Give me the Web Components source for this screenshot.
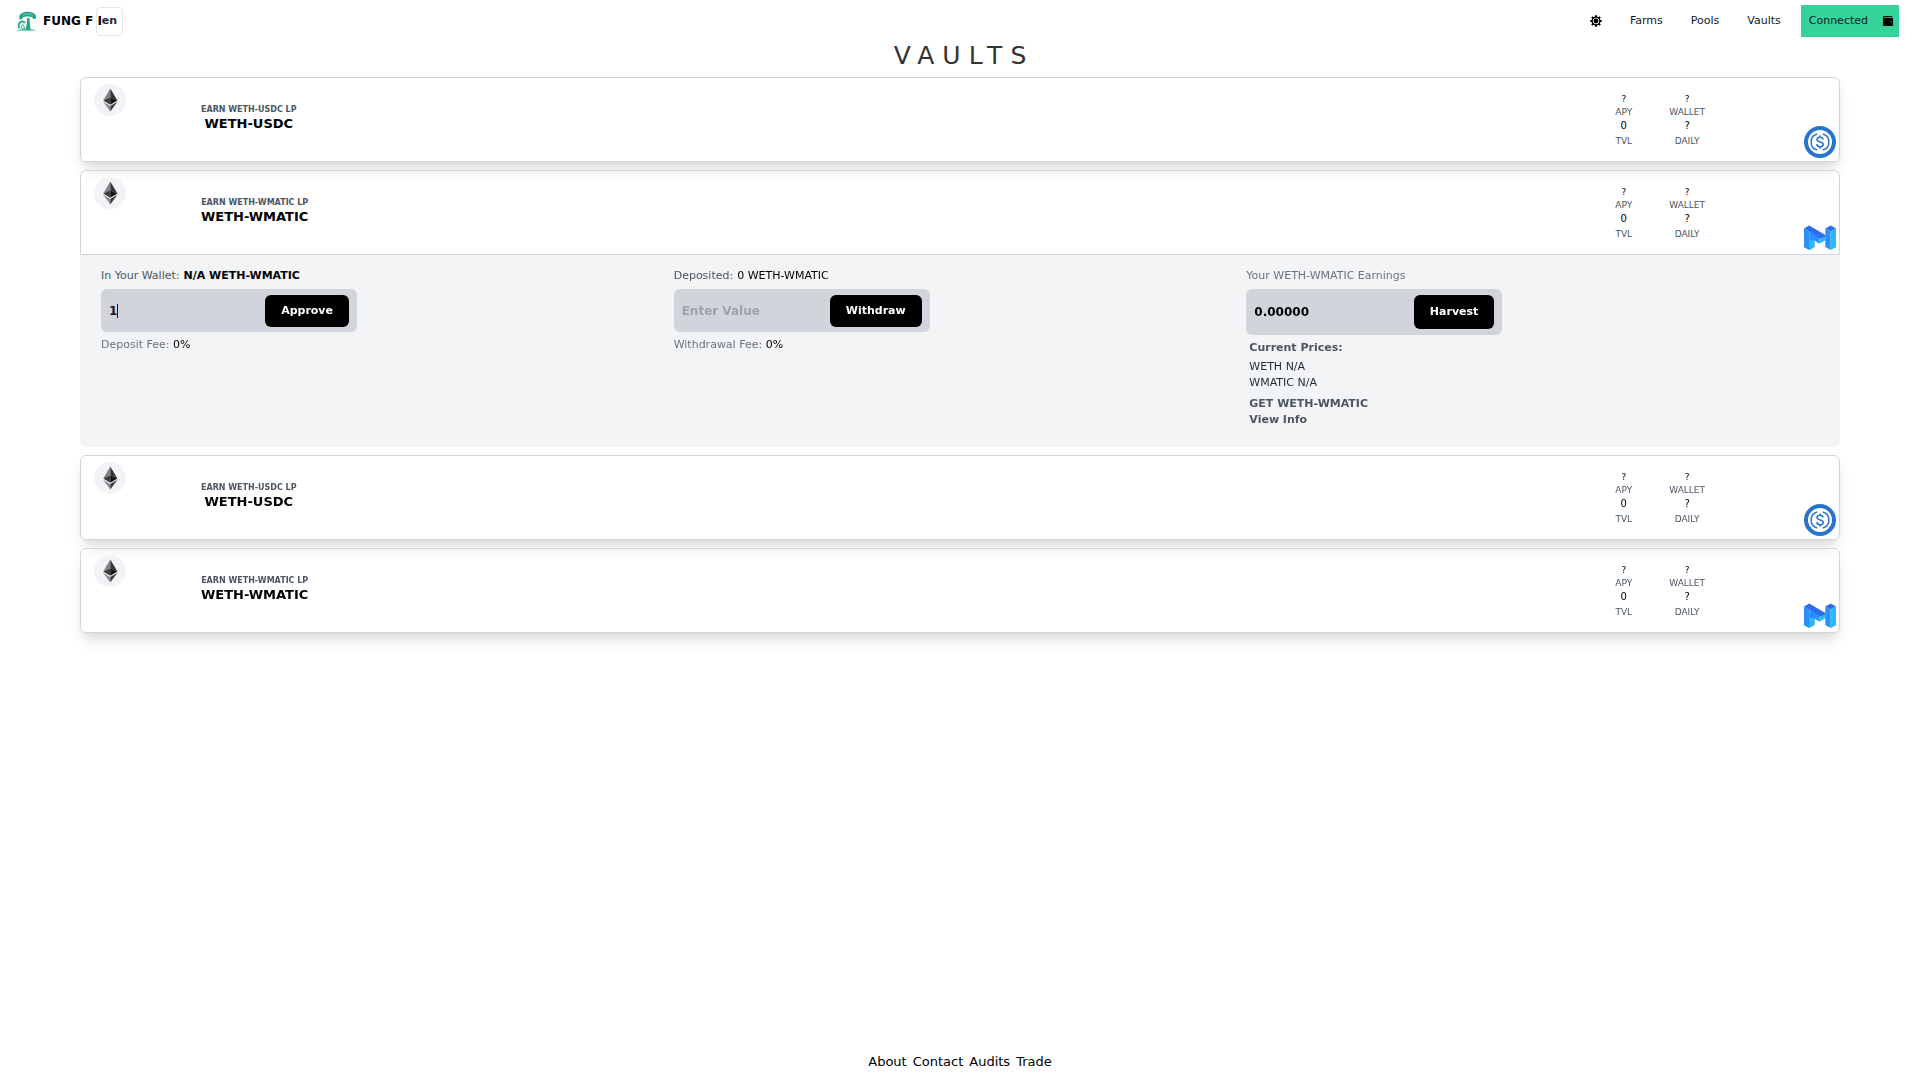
<!DOCTYPE html>
<html lang="en">
<head>
<meta charset="utf-8">
<title>Vaults</title>
<style>
html, body { height: 100%; }
body { margin: 0; background: #fff; font-family: "DejaVu Sans", sans-serif; font-size: 13px; line-height: 20px; color: #111827; }
</style>
</head>
<body>
<vault-app></vault-app>
<script>
const define = (name, html, setup) => {
  const t = document.createElement('template');
  t.innerHTML = '<style>*{box-sizing:border-box}a{color:inherit;text-decoration:none}button,input,select{font:inherit;color:inherit;margin:0}button{cursor:pointer}</style>' + html;
  customElements.define(name, class extends HTMLElement {
    constructor() {
      super();
      this.attachShadow({ mode: 'open' }).append(t.content.cloneNode(true));
    }
    connectedCallback() { if (setup) setup(this, this.shadowRoot); }
  });
};

const icons = {
  logo: '<svg viewBox="0 0 21 20" width="21" height="20"><g fill="#22a58a"><path d="M3.500 8C2 3 7 .8 11.500 .8S21 3 20 7c-.8 1.600-3 1.400-3.500-.2C15 5 8 5 6.800 6.800 6.300 8.400 4.500 9 3.500 8z"/><path d="M11 7.500c1.200-1 2-.8 2.600 0-.2 3 .8 7 .9 11.500h-5c1-4 1.500-7 1.500-11.500z"/><path d="M.2 19.500c4-1.800 16-1.800 20.500 0z"/></g><path d="M3 17.500c-1-4 .5-6.500 3-7.200 1.800 0 2.500 1 2.700 2" fill="none" stroke="#22a58a" stroke-width="1.800"/><path d="M8.300 14.300a2 2 0 1 0 .3 3.200v-1.300H7.200" fill="none" stroke="#22a58a"/><path d="M6.500 4c3-1.400 7-1.400 10.500 0" fill="none" stroke="#8fd3c3" stroke-width=".8"/></svg>',
  sun: '<svg viewBox="0 0 12 12" width="12" height="12"><g fill="none" stroke="#000"><circle cx="6" cy="6" r="3.900" stroke-width="1.400"/><path stroke-width="1.900" d="M6 .3v2M6 9.700v2M.3 6h2M9.700 6h2M1.800 1.800l1.600 1.600M8.600 8.600l1.600 1.600M1.800 10.200l1.600-1.600M8.600 3.400l1.600-1.600"/></g><circle cx="6" cy="6" r="2.400"/></svg>',
  wallet: '<svg viewBox="0 0 10 10" width="10" height="10"><path fill-rule="evenodd" d="M1.300 0h8v1H1v.7h8.200q.8 0 .8.800V9q0 .9-.9.900H1Q0 9.900 0 9V1.200Q0 0 1.300 0zM7.500 5.200v1h1v-1z"/></svg>',
  eth: '<svg viewBox="0 0 32 32" width="32" height="32"><circle cx="16" cy="16" r="16" fill="#f2f3f7"/><path d="M16.300 4.500v8.800L9.200 16.500z" fill="#828384"/><path d="M16.300 4.500v8.800l7.100 3.200z" fill="#343434"/><path d="M9.200 16.500l7.100-3.200v7.400z" fill="#3c3c3b"/><path d="M16.300 13.300l7.100 3.200-7.100 4.200z" fill="#141414"/><path d="M9.200 17.800l7.100 4.200v5.500z" fill="#8c8c8c"/><path d="M16.300 22l7.100-4.200-7.100 9.700z" fill="#3c3c3b"/></svg>',
  usdc: '<svg viewBox="0 0 32 32" width="32" height="32"><circle cx="16" cy="16" r="14" fill="#fff" stroke="#2775ca" stroke-width="4"/><g fill="none" stroke="#2775ca" stroke-width="1.500"><path d="M13.200 8A8.300 8.300 0 0 0 13.200 24M18.800 8A8.300 8.300 0 0 1 18.800 24"/><path stroke-width="1.600" d="M19 13.500c-.2-1.500-1.300-2.200-3-2.200-1.800 0-2.900.8-2.900 2.200 0 3.100 6.100 1.700 6.100 4.900 0 1.500-1.300 2.300-3.200 2.300S13 19.800 12.800 18.200M16 9.600v1.700M16 20.700v1.800"/></g></svg>',
  matic: '<svg viewBox="0 0 32 26" width="32" height="26"><path d="M5.200 6.400l10.300 6v6.300l-5-3.200V22L5.200 25z" fill="#2891f9"/><path d="M5.200 15.500l5.300-.7V22L5.200 25z" fill="#2cb8fa"/><path d="M15.500 12.400l6-1.400v4.200l-6 3.500z" fill="#2cb8fa"/><path d="M0 3.500l5.200 2.900V25L0 22.200z" fill="#2891f9"/><path d="M0 3.500L5.200 .5l16.200 9.400v1.600l-5.600 1.900L5.200 6.400z" fill="#2b6def"/><path d="M21.300 3.500L26.700 .5l5.300 3-5.300 2.900z" fill="#2b6def"/><path d="M21.300 3.500l5.400 2.900V25l-5.400-2.900z" fill="#2891f9"/><path d="M26.700 6.400L32 3.500v18.700L26.700 25z" fill="#2cb8fa"/></svg>'
};

define('ui-icon', '<style>:host{display:block}svg{display:block}</style><div></div>', (el, root) => {
  root.querySelector('div').innerHTML = icons[el.getAttribute('name')];
});

define('site-header', `<style>
:host{display:flex;align-items:flex-start;justify-content:space-between;padding:5px 21px 0 16px;height:40px}
.brand{display:flex;align-items:center;height:32px}
.brand a{display:flex;align-items:center;gap:6px;font-size:12px;font-weight:700;color:#000;white-space:pre}
select{appearance:none;background:transparent;border:1px solid #e5e7eb;border-radius:4px;width:27px;height:29px;padding:0 5px;font-size:11px;font-weight:700;color:#1f2937;margin-left:-6px}
nav{display:flex;align-items:center;height:32px;font-size:11px}
nav>a{margin-right:28px}
.theme{border:0;padding:0;background:none;margin-right:28px}
.wallet{display:flex;align-items:center;gap:15px;height:32px;border:0;border-radius:0;background:#34d399;padding:0 6px 0 8px;margin-left:-8px}
</style>
<div class="brand"><a href="#"><ui-icon name="logo"></ui-icon><span>FUNG F I</span></a><select aria-label="Language"><option>en</option></select></div>
<nav><button class="theme" aria-label="Theme"><ui-icon name="sun"></ui-icon></button><a href="#">Farms</a><a href="#">Pools</a><a href="#">Vaults</a><button class="wallet">Connected<ui-icon name="wallet"></ui-icon></button></nav>`);

define('stat-item', `<style>
:host{display:flex;flex-direction:column;align-items:center;font-size:9px}
.v{line-height:14px;color:#000}
.l{line-height:13px;color:#4b5563}
:host([large]) .v{font-size:10px}
:host([large]) .l{line-height:16px}
</style><span class="v"><slot></slot></span><span class="l"></span>`, (el, root) => { root.querySelector('.l').textContent = el.getAttribute('label'); });

define('vault-card', `<style>
:host{display:block}
.card{display:flex;height:85px;border:1px solid #d1d5db;border-radius:6px;box-shadow:0 10px 15px -3px rgba(0,0,0,.12),0 4px 8px -2px rgba(0,0,0,.06);cursor:pointer}
:host([open]) .card{border-radius:6px 6px 0 0;box-shadow:none}
.from{padding:6px 0 0 13px;width:120px}
.name{padding-top:25px;text-align:center}
.earn{font-size:8px;line-height:14px;font-weight:700;color:#4b5563}
.pair{font-size:13px;line-height:14px;font-weight:700;color:#000}
.stats{display:grid;grid-template-columns:auto auto;column-gap:37px;margin-left:auto;padding-top:14px;align-content:start}
.to{display:flex;align-items:flex-end;width:134px;justify-content:flex-end;padding:0 3px 3px 0}
</style>
<section><div class="card"><div class="from"><ui-icon name="eth"></ui-icon></div>
<div class="name"><div class="earn"></div><div class="pair"></div></div>
<div class="stats"><stat-item label="APY">?</stat-item><stat-item label="WALLET">?</stat-item><stat-item large label="TVL">0</stat-item><stat-item large label="DAILY">?</stat-item></div>
<div class="to"></div></div><slot></slot></section>`, (el, root) => {
  const pair = el.getAttribute('pair');
  root.querySelector('.earn').textContent = 'EARN ' + pair + ' LP';
  root.querySelector('.pair').textContent = pair;
  const icon = document.createElement('ui-icon');
  icon.setAttribute('name', el.getAttribute('token'));
  root.querySelector('.to').replaceChildren(icon);
});

define('vault-details', `<style>
:host{display:grid;grid-template-columns:repeat(3,1fr);height:192px;padding:13px 21px;background:#f3f4f6;border-radius:0 0 6px 6px;font-size:11px;line-height:16px}
.row{display:flex;gap:4px;color:#4b5563}
.row span,.fee span{color:#000}.row b{color:#000}
.gray,.fee{color:#6b7280}
.box{display:flex;align-items:center;justify-content:space-between;width:256px;margin:5px 0;padding:6px 8px 5px;background:#d1d5db;border-radius:6px;font-weight:700;font-size:12px;color:#000}
input{width:130px;border:0;background:none;outline:0;padding:0;color:#111827}
input::placeholder{color:#9ca3af;opacity:1}
#dep{caret-color:transparent}
#dep:focus{background:linear-gradient(#111827,#111827) 8px center/1px 14px no-repeat}
button{height:32px;border:0;border-radius:6px;background:#000;color:#fff;padding:0 16px;font-size:11px}
.tall{padding-bottom:6px}.tall button{height:34px}
.links{padding:0 0 0 3px;display:flex;flex-direction:column;color:#1f2937}
.strong{font-weight:700;color:#4b5563}
p{margin:0}.prices{padding:3px 0 5px}
</style>
<div><label class="row" for="dep">In Your Wallet: <b>N/A WETH-WMATIC</b></label><div class="box"><input id="dep" value="1"><button>Approve</button></div><p class="fee">Deposit Fee: <span>0%</span></p></div>
<div><label class="row" for="wd">Deposited: <span>0 WETH-WMATIC</span></label><div class="box"><input id="wd" placeholder="Enter Value"><button>Withdraw</button></div><p class="fee">Withdrawal Fee: <span>0%</span></p></div>
<div><p class="gray">Your WETH-WMATIC Earnings</p><div class="box tall"><span>0.00000</span><button>Harvest</button></div>
<div class="links"><span class="strong">Current Prices:</span><div class="prices"><p>WETH N/A</p><p>WMATIC N/A</p></div><a class="strong" href="#">GET WETH-WMATIC</a><a class="strong" href="#">View Info</a></div></div>`, (el, root) => {
  root.querySelector('#dep').focus();
});

define('site-footer', `<style>:host{display:flex;justify-content:center;gap:6px;font-size:13px;line-height:20px;color:#000;padding-bottom:8px}</style>
<a href="#">About</a><a href="#">Contact</a><a href="#">Audits</a><a href="#">Trade</a>`);

define('vault-app', `<style>
:host{display:flex;flex-direction:column;min-height:100vh}
h1{margin:0;padding-left:8px;font-size:25px;line-height:32px;font-weight:400;letter-spacing:8px;text-align:center;color:#333}
main{flex:1;padding:0 80px}
.list{display:flex;flex-direction:column;gap:8px;padding-top:5px}
</style>
<site-header></site-header><main><h1>VAULTS</h1><div class="list">
<vault-card pair="WETH-USDC" token="usdc"></vault-card>
<vault-card open pair="WETH-WMATIC" token="matic"><vault-details></vault-details></vault-card>
<vault-card pair="WETH-USDC" token="usdc"></vault-card>
<vault-card pair="WETH-WMATIC" token="matic"></vault-card>
</div></main><site-footer></site-footer>`);
</script>
</body>
</html>
